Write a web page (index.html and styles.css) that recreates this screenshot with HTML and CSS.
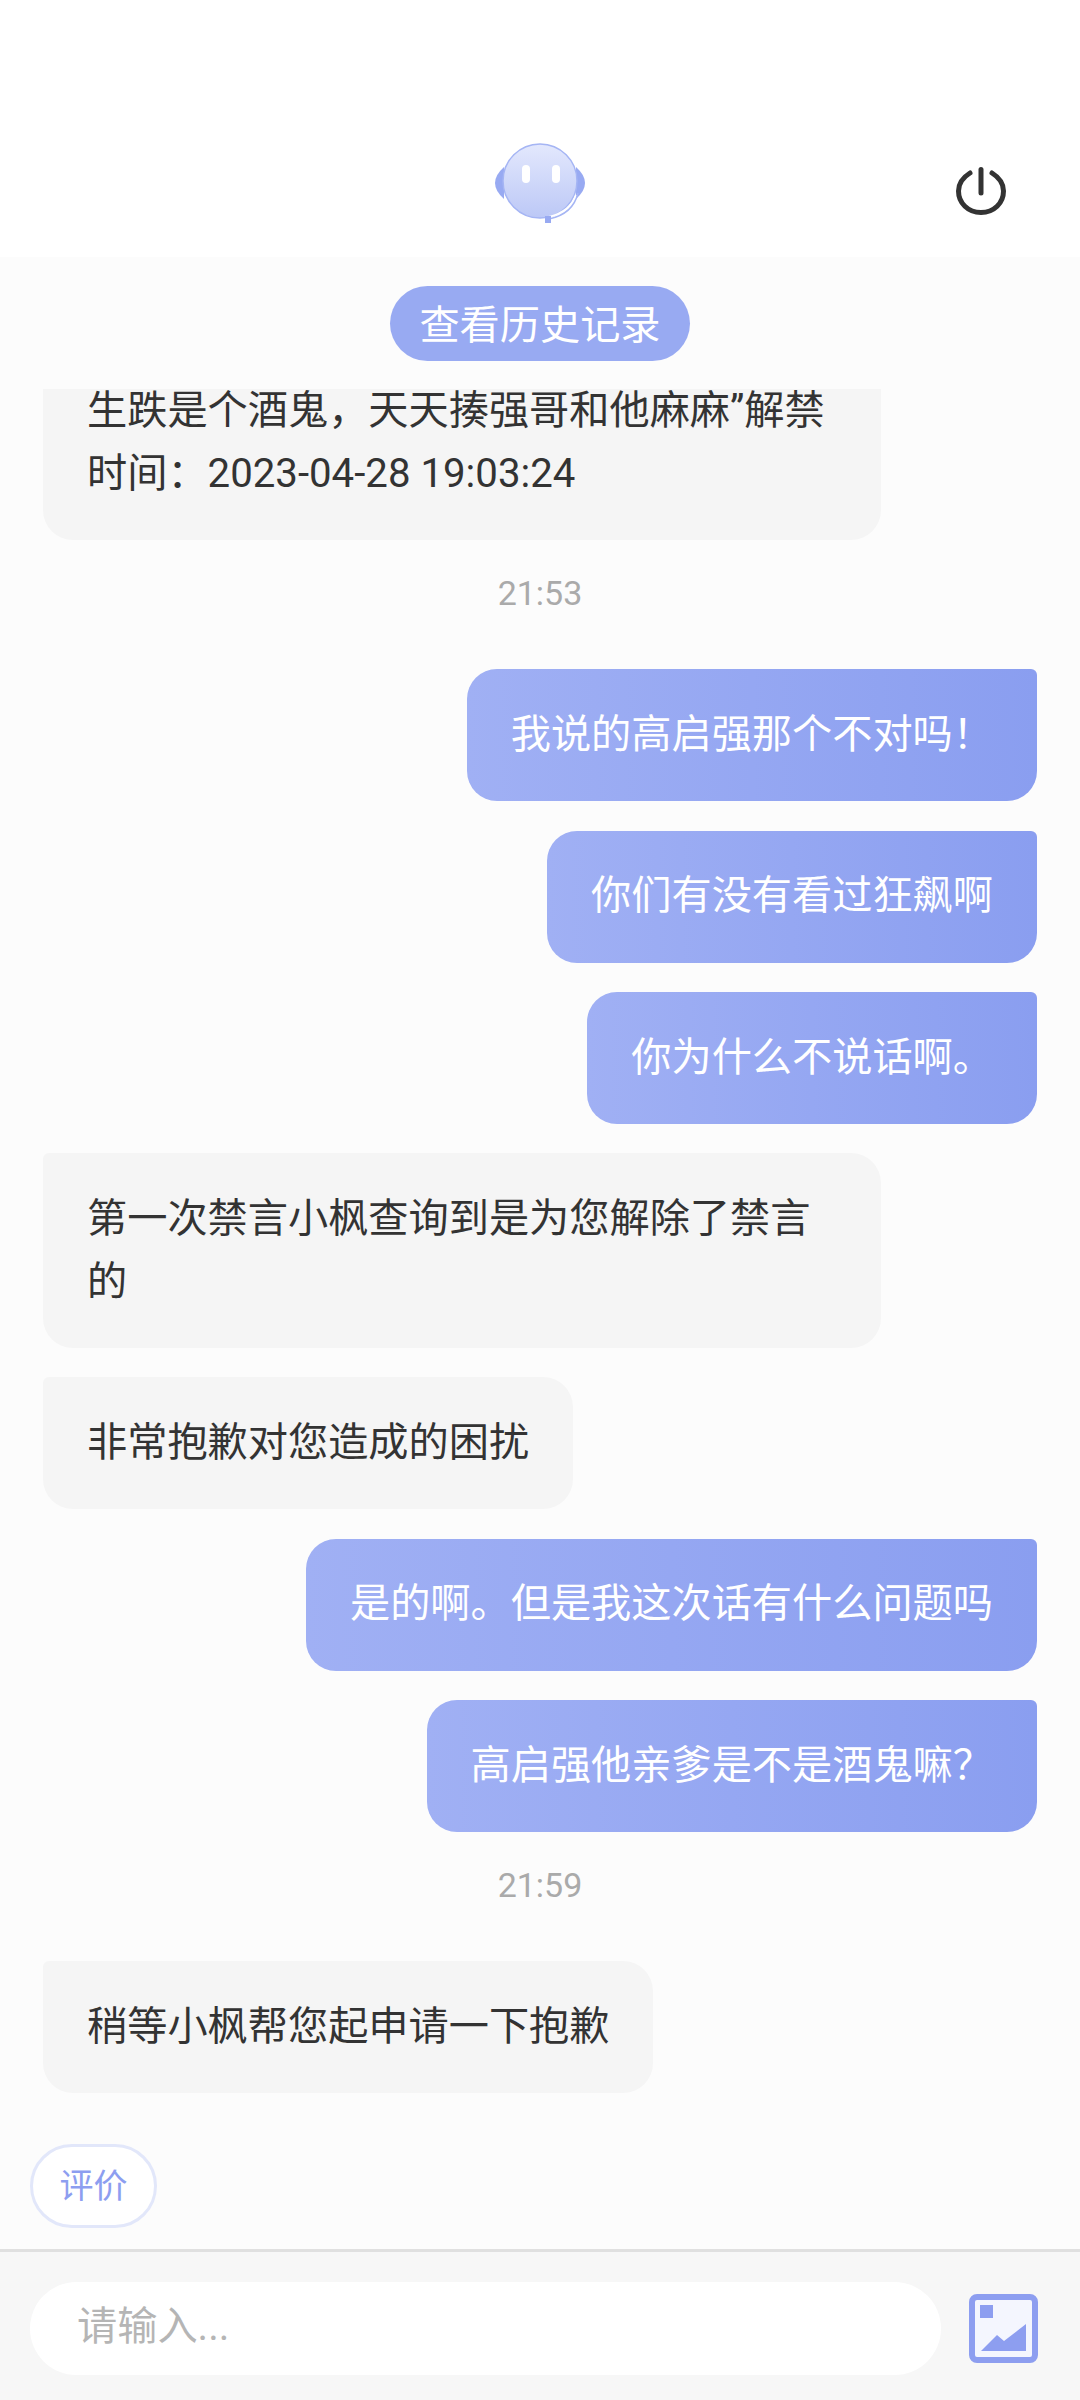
FILE: index.html
```html
<!DOCTYPE html>
<html lang="zh-CN">
<head>
    <meta charset="UTF-8">
    <meta name="viewport" content="width=device-width, initial-scale=1.0">
    <title>在线客服</title>
    <link rel="stylesheet" href="styles.css">
</head>
<body>
    <header class="top-bar">
        <svg class="avatar" viewBox="0 0 90 80" aria-hidden="true">
            <defs>
                <linearGradient id="face" x1="0" y1="0" x2="0" y2="1">
                    <stop offset="0" stop-color="#e3e8fd"/>
                    <stop offset="1" stop-color="#bcc8f6"/>
                </linearGradient>
            </defs>
            <path d="M9 24 Q0 32 0 40 Q0 48 9 56 Z" fill="#98aaf2"/>
            <path d="M81 24 Q90 32 90 40 Q90 48 81 56 Z" fill="#98aaf2"/>
            <ellipse cx="45" cy="38" rx="37" ry="37" fill="url(#face)" stroke="#a5b5f4" stroke-width="1.5"/>
            <rect x="27" y="22" width="8" height="18" rx="4" fill="#fff"/>
            <rect x="57" y="22" width="8" height="18" rx="4" fill="#fff"/>
            <path d="M81 52 Q76 68 54 74" fill="none" stroke="#fff" stroke-width="2"/>
            <path d="M83 50 Q78 71 54 76" fill="none" stroke="#a5b5f4" stroke-width="1.5"/>
            <rect x="50" y="73" width="6" height="7" fill="#98aaf2"/>
        </svg>
        <svg class="power" viewBox="0 0 50 48" aria-hidden="true">
            <path d="M14 6 C6 11 2.500 17 2.500 24 C2.500 36 12 45.500 25 45.500 C38 45.500 47.500 36 47.500 24 C47.500 17 44 11 36 6" fill="none" stroke="#333" stroke-width="5" stroke-linecap="round"/>
            <line x1="25" y1="2.500" x2="25" y2="26" stroke="#333" stroke-width="5" stroke-linecap="round"/>
        </svg>
    </header>

    <div class="history-row">
        <button class="history-btn">查看历史记录</button>
    </div>

    <!-- Messages, pinned to the bottom so the oldest one gets cut off at the top -->
    <main class="messages">
        <div class="bubble agent wide">生跌是个酒鬼，天天揍强哥和他麻麻”解禁<br>时间：2023-04-28 19:03:24</div>
        <div class="time">21:53</div>
        <div class="bubble user">我说的高启强那个不对吗！</div>
        <div class="bubble user">你们有没有看过狂飙啊</div>
        <div class="bubble user">你为什么不说话啊。</div>
        <div class="bubble agent wide">第一次禁言小枫查询到是为您解除了禁言的</div>
        <div class="bubble agent">非常抱歉对您造成的困扰</div>
        <div class="bubble user">是的啊。但是我这次话有什么问题吗</div>
        <div class="bubble user">高启强他亲爹是不是酒鬼嘛？</div>
        <div class="time">21:59</div>
        <div class="bubble agent">稍等小枫帮您起申请一下抱歉</div>
    </main>

    <div class="rate-row">
        <button class="rate-btn">评价</button>
    </div>

    <footer class="input-bar">
        <div class="input-box">请输入...</div>
        <svg class="pic-icon" viewBox="0 0 69 69" aria-hidden="true">
            <rect x="3" y="3" width="63" height="63" rx="5" fill="#f4f6fe" stroke="#8d9ef0" stroke-width="6"/>
            <rect x="11" y="11" width="13" height="13" fill="#8d9ef0"/>
            <path d="M12 57 L28 41 L35 47 L57 30 V57 Z" fill="#8d9ef0"/>
        </svg>
    </footer>
</body>
</html>
```

FILE: styles.css
```css
* {
    box-sizing: border-box;
}
body {
    margin: 0;
    width: 1080px;
    height: 2400px;
    display: flex;
    flex-direction: column;
    overflow: hidden;
    background-color: #fcfcfc;
    font-family: Roboto, "Noto Sans CJK SC", sans-serif;
    color: #333;
}
button {
    font-family: inherit;
    border: none;
    padding: 0;
}
.top-bar {
    height: 257px;
    flex-shrink: 0;
    background-color: #fff;
    display: flex;
    justify-content: center;
    position: relative;
}
.avatar {
    width: 90px;
    height: 80px;
    margin-top: 143px;
    filter: blur(0.7px);
}
.power {
    position: absolute;
    left: 956px;
    top: 167px;
    width: 50px;
    height: 48px;
}
.history-row {
    height: 132px;
    flex-shrink: 0;
    padding-top: 29px;
    display: flex;
    justify-content: center;
    align-items: flex-start;
}
.history-btn {
    width: 300px;
    height: 75px;
    padding-bottom: 5px;
    border-radius: 38px;
    background-color: #98aaf2;
    color: #fff;
    font-size: 40.2px;
}
.messages {
    flex: 1;
    min-height: 0;
    overflow: hidden;
    display: flex;
    flex-direction: column;
    justify-content: flex-end;
    padding: 0 43px;
}
.bubble {
    flex-shrink: 0;
    max-width: 838px;
    padding: 34.75px 44px;
    font-size: 40.2px;
    line-height: 62.5px;
    margin-top: 29.4px;
}
.agent {
    align-self: flex-start;
    background-color: #f5f5f5;
    border-radius: 6px 30px 30px 30px;
    color: #333;
}
.agent.wide {
    width: 838px;
}
.user {
    align-self: flex-end;
    background: linear-gradient(to right, #a0b0f4, #8a9ef0);
    border-radius: 30px 6px 30px 30px;
    color: #fff;
}
.time {
    flex-shrink: 0;
    height: 40px;
    line-height: 40px;
    margin-top: 33px;
    margin-bottom: 26.6px;
    text-align: center;
    font-size: 34px;
    color: #aaa;
}
.rate-row {
    height: 156px;
    flex-shrink: 0;
    padding: 51px 0 0 30px;
}
.rate-btn {
    display: block;
    width: 127px;
    height: 84px;
    padding-bottom: 5px;
    border: 3px solid #e2e7fa;
    border-radius: 42px;
    background-color: #fff;
    color: #8d9ef0;
    font-size: 34px;
}
.input-bar {
    height: 151px;
    flex-shrink: 0;
    background-color: #f7f7f7;
    border-top: 3px solid #e0e0e0;
    padding: 30px 42px 0 30px;
    display: flex;
    align-items: flex-start;
    justify-content: space-between;
}
.input-box {
    width: 911px;
    height: 93px;
    padding-left: 47px;
    border-radius: 47px;
    background-color: #fff;
    color: #b5b5b5;
    font-size: 40.2px;
    line-height: 89px;
}
.pic-icon {
    width: 69px;
    height: 69px;
    margin-top: 12px;
}
```
